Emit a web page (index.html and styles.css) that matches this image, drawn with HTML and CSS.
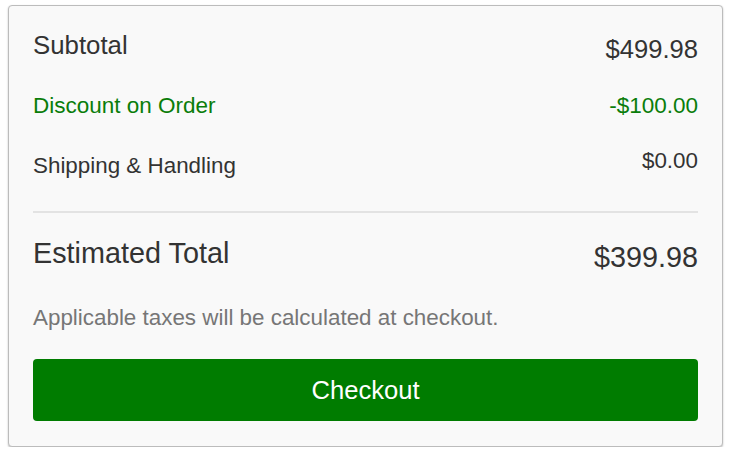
FILE: index.html
```html
<!DOCTYPE html>
<html lang="en">
<head>
<meta charset="utf-8">
<title>Order Summary</title>
<link rel="stylesheet" href="styles.css">
</head>
<body>
<section class="summary">
  <div class="row row-subtotal">
    <span class="label">Subtotal</span>
    <span class="value">$499.98</span>
  </div>
  <div class="row row-discount">
    <span class="label">Discount on Order</span>
    <span class="value">-$100.00</span>
  </div>
  <div class="row row-shipping">
    <span class="label">Shipping &amp; Handling</span>
    <span class="value">$0.00</span>
  </div>
  <hr class="divider">
  <div class="row row-total">
    <span class="label">Estimated Total</span>
    <span class="value">$399.98</span>
  </div>
  <p class="note">Applicable taxes will be calculated at checkout.</p>
  <button class="checkout" type="button">Checkout</button>
</section>
</body>
</html>
```

FILE: styles.css
```css
html, body {
  margin: 0;
  padding: 0;
  background: #ffffff;
}

body {
  font-family: "Liberation Sans", Arial, Helvetica, sans-serif;
  color: #333333;
  padding: 5px 0 0 8px;
}

.summary {
  box-sizing: border-box;
  width: 715px;
  background: #f9f9f9;
  border: 1px solid #bcbcbc;
  border-radius: 4px;
  box-shadow: 0 1px 2px rgba(0, 0, 0, 0.25);
  padding: 24px 24px 25px;
  display: flex;
  flex-direction: column;
}

.row {
  display: flex;
  justify-content: space-between;
  align-items: flex-start;
}

.row-subtotal .label {
  font-size: 25.8px;
  line-height: 30px;
}

.row-subtotal .value {
  font-size: 25.6px;
  line-height: 30px;
  margin-top: 4px;
}

.row-discount {
  margin-top: 29px;
  color: #0a7d0a;
  font-size: 22.5px;
  line-height: 26px;
}

.row-shipping {
  margin-top: 29px;
  font-size: 22.4px;
  line-height: 26px;
}

.row-shipping .label {
  margin-top: 5px;
}

.divider {
  margin: 32px 0 0;
  border: 0;
  height: 2px;
  background: #e3e3e3;
}

.row-total {
  margin-top: 24px;
  font-size: 28.8px;
  line-height: 32px;
}

.row-total .value {
  margin-top: 4px;
}

.note {
  margin: 32px 0 0;
  font-size: 22.4px;
  line-height: 26px;
  color: #767676;
}

.checkout {
  margin-top: 28px;
  height: 62px;
  border: 0;
  border-radius: 4px;
  background: #007c00;
  color: #ffffff;
  font-family: "Liberation Sans", Arial, Helvetica, sans-serif;
  font-size: 25.6px;
  cursor: pointer;
}
```
